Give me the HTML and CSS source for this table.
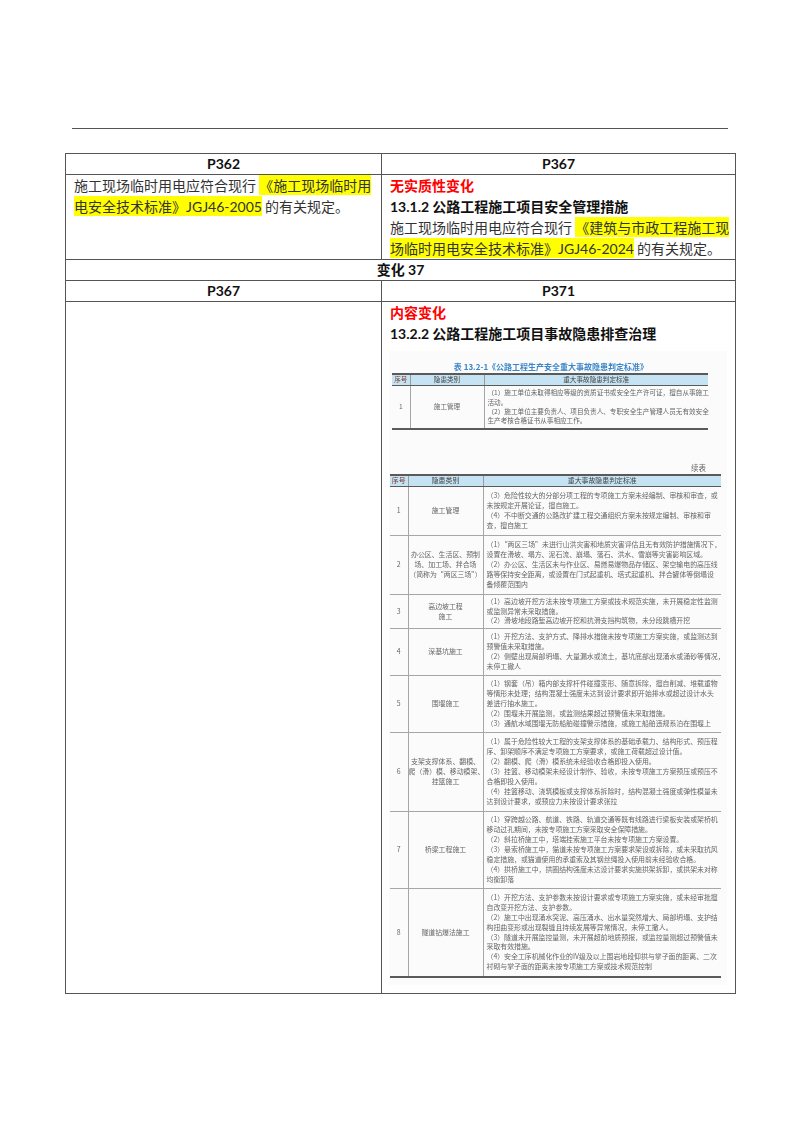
FILE: index.html
```html
<!DOCTYPE html>
<html lang="zh-CN">
<head>
<meta charset="utf-8">
<title>变化对照</title>
<link rel="stylesheet" href="styles.css">
</head>
<body>
<div class="page">
  <div class="rule"></div>
  <table class="cmp">
    <colgroup><col class="c-left"><col class="c-right"></colgroup>
    <tr class="hdr"><th>P362</th><th>P367</th></tr>
    <tr class="row-a">
      <td class="txt">施工现场临时用电应符合现行 <mark>《施工现场临时用<br>电安全技术标准》<span class="lat">JGJ46-2005</span></mark> 的有关规定。</td>
      <td class="txt">
        <div class="red">无实质性变化</div>
        <div class="sec"><span class="lat">13.1.2</span> 公路工程施工项目安全管理措施</div>
        <div class="nw">施工现场临时用电应符合现行 <mark>《建筑与市政工程施工现<br>场临时用电安全技术标准》<span class="lat">JGJ46-2024</span></mark> 的有关规定。</div>
      </td>
    </tr>
    <tr class="hdr"><th colspan="2">变化 37</th></tr>
    <tr class="hdr"><th>P367</th><th>P371</th></tr>
    <tr class="row-b">
      <td></td>
      <td class="txt">
        <div class="red">内容变化</div>
        <div class="sec"><span class="lat">13.2.2</span> 公路工程施工项目事故隐患排查治理</div>
        <div class="scan">
          <div class="scan-title">表 13.2-1《公路工程生产安全重大事故隐患判定标准》</div>
          <table class="st st1">
            <colgroup><col class="k1"><col class="k2"><col></colgroup>
            <tr><th class="no">序号</th><th>隐患类别</th><th>重大事故隐患判定标准</th></tr>
            <tr class="h43"><td class="ctr">1</td><td class="ctr">施工管理</td><td>（1）施工单位未取得相应等级的资质证书或安全生产许可证，擅自从事施工<br>活动。<br>（2）施工单位主要负责人、项目负责人、专职安全生产管理人员无有效安全<br>生产考核合格证书从事相应工作。</td></tr>
          </table>
          <div class="cont">续表</div>
          <table class="st st2">
            <colgroup><col class="k1"><col class="k2"><col></colgroup>
            <tr><th class="no">序号</th><th>隐患类别</th><th>重大事故隐患判定标准</th></tr>
            <tr class="r1"><td class="ctr">1</td><td class="ctr">施工管理</td><td>（3）危险性较大的分部分项工程的专项施工方案未经编制、审核和审查，或<br>未按规定开展论证，擅自施工。<br>（4）不中断交通的公路改扩建工程交通组织方案未按规定编制、审核和审<br>查，擅自施工</td></tr>
            <tr class="r2"><td class="ctr">2</td><td class="ctr">办公区、生活区、预制<br>场、加工场、拌合场<br>（简称为“两区三场”）</td><td>（1）“两区三场”未进行山洪灾害和地质灾害评估且无有效防护措施情况下，<br>设置在滑坡、塌方、泥石流、崩塌、落石、洪水、雪崩等灾害影响区域。<br>（2）办公区、生活区未与作业区、易燃易爆物品存储区、架空输电的高压线<br>路等保持安全距离，或设置在门式起重机、塔式起重机、拌合罐体等倒塌设<br>备倾覆范围内</td></tr>
            <tr class="r3"><td class="ctr">3</td><td class="ctr">高边坡工程<br>施工</td><td>（1）高边坡开挖方法未按专项施工方案或技术规范实施，未开展稳定性监测<br>或监测异常未采取措施。<br>（2）滑坡地段路堑高边坡开挖和抗滑支挡构筑物，未分段跳槽开挖</td></tr>
            <tr class="r4"><td class="ctr">4</td><td class="ctr">深基坑施工</td><td>（1）开挖方法、支护方式、降排水措施未按专项施工方案实施，或监测达到<br>预警值未采取措施。<br>（2）侧壁出现局部坍塌、大量漏水或流土，基坑底部出现涌水或涌砂等情况，<br>未停工撤人</td></tr>
            <tr class="r5"><td class="ctr">5</td><td class="ctr">围堰施工</td><td>（1）钢套（吊）箱内部支撑杆件碰撞变形、随意拆除，擅自削减、堆载重物<br>等情形未处理；结构混凝土强度未达到设计要求即开始排水或超过设计水头<br>差进行抽水施工。<br>（2）围堰未开展监测，或监测结果超过预警值未采取措施。<br>（3）通航水域围堰无防船舶碰撞警示措施，或施工船舶违规系泊在围堰上</td></tr>
            <tr class="r6"><td class="ctr">6</td><td class="ctr">支架支撑体系、翻模、<br>爬（滑）模、移动模架、<br>挂篮施工</td><td>（1）属于危险性较大工程的支架支撑体系的基础承载力、结构形式、预压程<br>序、卸架顺序不满足专项施工方案要求，或施工荷载超过设计值。<br>（2）翻模、爬（滑）模系统未经验收合格即投入使用。<br>（3）挂篮、移动模架未经设计制作、验收，未按专项施工方案预压或预压不<br>合格即投入使用。<br>（4）挂篮移动、浇筑模板或支撑体系拆除时，结构混凝土强度或弹性模量未<br>达到设计要求，或预应力未按设计要求张拉</td></tr>
            <tr class="r7"><td class="ctr">7</td><td class="ctr">桥梁工程施工</td><td>（1）穿跨越公路、航道、铁路、轨道交通等既有线路进行梁板安装或架桥机<br>移动过孔期间，未按专项施工方案采取安全保障措施。<br>（2）斜拉桥施工中，塔端挂索施工平台未按专项施工方案设置。<br>（3）悬索桥施工中，猫道未按专项施工方案要求架设或拆除，或未采取抗风<br>稳定措施，或猫道使用的承重索及其钢丝绳投入使用前未经验收合格。<br>（4）拱桥施工中，拱圈结构强度未达设计要求实施拱架拆卸，或拱架未对称<br>均衡卸落</td></tr>
            <tr class="r8"><td class="ctr">8</td><td class="ctr">隧道钻爆法施工</td><td>（1）开挖方法、支护参数未按设计要求或专项施工方案实施，或未经审批擅<br>自改变开挖方法、支护参数。<br>（2）施工中出现涌水突泥、高压涌水、出水量突然增大、局部坍塌、支护结<br>构扭曲变形或出现裂缝且持续发展等异常情况，未停工撤人。<br>（3）隧道未开展监控量测，未开展超前地质预报，或监控量测超过预警值未<br>采取有效措施。<br>（4）安全工序机械化作业的IV级及以上围岩地段仰拱与掌子面的距离、二次<br>衬砌与掌子面的距离未按专项施工方案或技术规范控制</td></tr>
          </table>
        </div>
      </td>
    </tr>
  </table>
</div>
</body>
</html>
```

FILE: styles.css
```css
html, body {
  margin: 0;
  padding: 0;
  background: #ffffff;
}

body {
  font-family: "Lato", "Noto Sans CJK SC", sans-serif;
  color: #333333;
}

.page {
  padding: 128px 0 0 65px;
}

.rule {
  width: 656px;
  margin-left: 7px;
  border-top: 1px solid #555555;
}

.cmp {
  margin-top: 24px;
  border-collapse: collapse;
  width: 670px;
  table-layout: fixed;
}

.c-left { width: 316px; }
.c-right { width: 354px; }

.cmp > tbody > tr > th,
.cmp > tbody > tr > td {
  border: 1px solid #555555;
  padding: 0 8px;
}

.hdr th {
  height: 20px;
  font-size: 14px;
  font-weight: 700;
  color: #111111;
  text-align: center;
  vertical-align: middle;
  line-height: 20px;
}

.txt {
  font-family: "Noto Sans CJK SC", sans-serif;
  font-size: 14px;
  line-height: 21px;
  vertical-align: top;
  color: #333333;
}

.row-a td { height: 84px; }
.row-b td { height: 691px; vertical-align: top; }

.lat {
  font-family: "Lato", "Noto Sans CJK SC", sans-serif;
}

.nw { white-space: nowrap; }

mark {
  background: #ffff00;
  color: #333333;
}

.red {
  color: #ff0000;
  font-weight: 700;
}

.sec {
  font-weight: 700;
  color: #111111;
}

/* scanned table image */
.scan {
  margin-top: 7px;
  margin-left: -1px;
  width: 338px;
  padding: 10px 0 7px;
  background: #fbfbfb;
  font-family: "Noto Sans CJK SC", sans-serif;
  filter: blur(0.2px);
}

.scan-title {
  width: 318px;
  margin-left: 3px;
  text-align: center;
  color: #3b86c8;
  font-size: 8px;
  font-weight: 700;
  line-height: 12px;
}

.st {
  border-collapse: collapse;
  table-layout: fixed;
  color: #666666;
  font-size: 6.6px;
  line-height: 9.4px;
}

.st1 {
  width: 316px;
  margin: 0 0 0 3px;
}

.st2 {
  width: 331px;
  margin: 0 0 0 1px;
  font-size: 6.9px;
  line-height: 9.9px;
}

.k1 { width: 18px; }
.k2 { width: 75px; }
.st1 .k2 { width: 74px; }

.st th {
  background: #c6e3f3;
  color: #444444;
  font-weight: 400;
  height: 10px;
  padding: 0;
  text-align: center;
  border-top: 2px solid #5a5a5a;
  border-bottom: 1px solid #5a5a5a;
  border-left: 1px solid #9a9a9a;
}

.st th:first-child { border-left: none; }

.st th.no { color: #7a3b2e; }

.st td {
  padding: 0 2px 0 3px;
  border-top: 1px solid #a6a6a6;
  border-left: 1px solid #a6a6a6;
  white-space: nowrap;
  vertical-align: middle;
}

.st td:first-child { border-left: none; }

.st tr:last-child td { border-bottom: 2px solid #5a5a5a; }

.st td.ctr { text-align: center; padding: 0; }

.h43 td { height: 42px; }

.cont {
  margin: 33px 0 1px 0;
  padding-right: 21px;
  text-align: right;
  color: #666666;
  font-size: 7.5px;
  line-height: 10px;
}

.r1 td { height: 48px; }
.r2 td { height: 58px; }
.r3 td { height: 33px; }
.r4 td { height: 46px; }
.r5 td { height: 56px; }
.r6 td { height: 78px; }
.r7 td { height: 76px; }
.r8 td { height: 87px; }
```
